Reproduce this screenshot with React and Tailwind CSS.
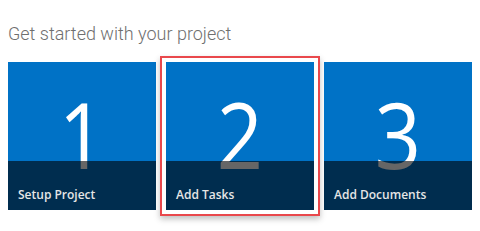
import React from 'react';

const steps = [
  { num: '1', label: 'Setup Project' },
  { num: '2', label: 'Add Tasks', selected: true },
  { num: '3', label: 'Add Documents' },
];

function Tile({ num, label, selected }) {
  return (
    <div className="relative">
      {selected && (
        <div className="absolute -inset-[6px] border-2 border-[#e9484c] shadow-[0_3px_6px_rgba(0,0,0,0.25)] pointer-events-none" />
      )}
      <div className="relative w-[148px] h-[148px] bg-[#0072c6] overflow-hidden">
        <div className="absolute inset-x-0 top-[22px] text-center text-white font-normal text-[92px] leading-[100px] scale-x-[0.88]">
          {num}
        </div>
        <div className="absolute inset-x-0 bottom-0 h-[49px] bg-black/60 px-[10px] pt-[26px]">
          <span className="block text-[#e6e6e6] text-[12px] leading-[16px] font-semibold">{label}</span>
        </div>
      </div>
    </div>
  );
}

export default function App() {
  return (
    <div
      className="w-[480px] h-[231px] bg-white"
      style={{ fontFamily: '"Open Sans", "Noto Sans", sans-serif' }}
    >
      <h1
        className="pl-[8px] pt-[21px] text-[18px] font-light text-[#6f6f6f] leading-[25px]"
        style={{ fontFamily: 'Roboto, "Open Sans", sans-serif' }}
      >
        Get started with your project
      </h1>
      <div className="flex gap-[10px] pl-[8px] mt-[16px]">
        {steps.map((s) => (
          <Tile key={s.num} {...s} />
        ))}
      </div>
    </div>
  );
}
